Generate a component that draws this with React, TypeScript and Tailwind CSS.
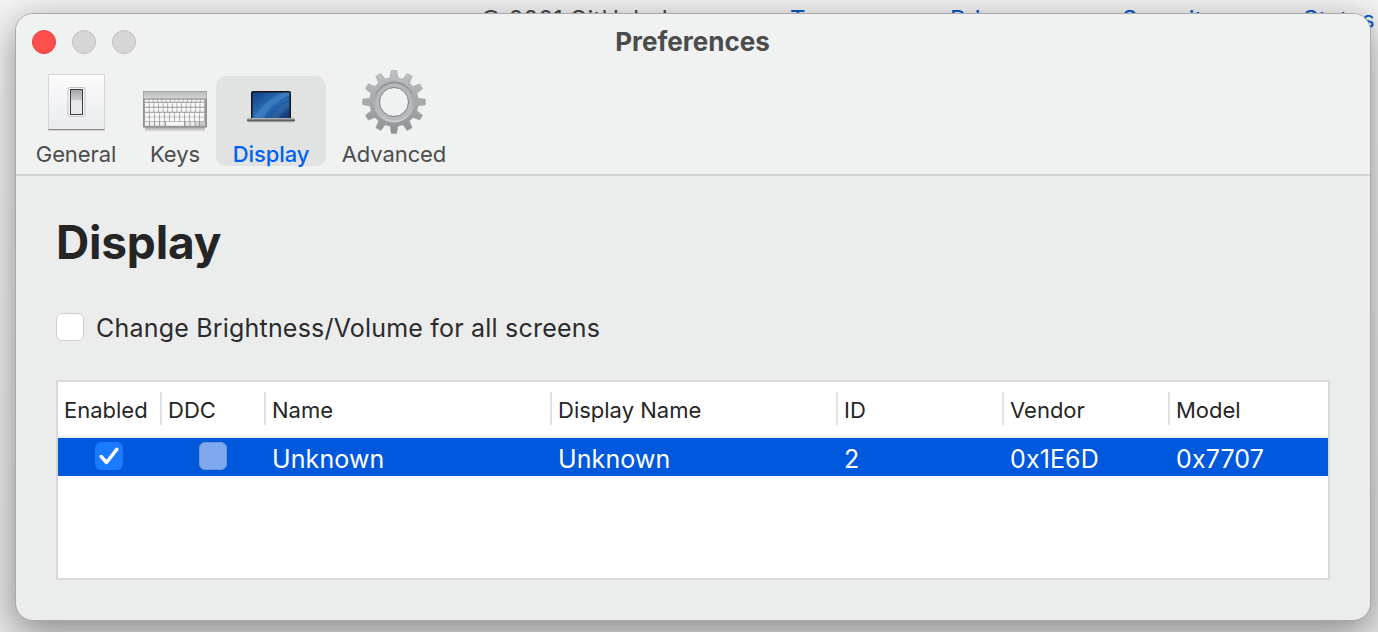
import React from "react";

function gearPath(cx: number, cy: number, rOut: number, rIn: number, teeth: number) {
  const pts: string[] = [];
  const step = (Math.PI * 2) / teeth;
  for (let i = 0; i < teeth; i++) {
    const a = i * step - Math.PI / 2;
    const add = (r: number, t: number) =>
      pts.push(`${(cx + r * Math.cos(a + t * step)).toFixed(2)} ${(cy + r * Math.sin(a + t * step)).toFixed(2)}`);
    add(rIn, -0.3);
    add(rOut, -0.17);
    add(rOut, 0.17);
    add(rIn, 0.3);
  }
  return "M" + pts.join("L") + "Z";
}

function SwitchIcon() {
  return (
    <svg width="58" height="58" viewBox="0 0 58 58">
      <defs>
        <linearGradient id="sw" x1="0" y1="0" x2="0" y2="1">
          <stop offset="0" stopColor="#fbfbfc" />
          <stop offset="1" stopColor="#e9ebee" />
        </linearGradient>
        <linearGradient id="sw2" x1="0" y1="0" x2="0" y2="1">
          <stop offset="0" stopColor="#a3a5a6" />
          <stop offset="0.4" stopColor="#c9cbcd" />
          <stop offset="0.42" stopColor="#e4e6e9" />
          <stop offset="1" stopColor="#e8eaed" />
        </linearGradient>
      </defs>
      <rect x="0.5" y="0.5" width="56" height="55.5" fill="url(#sw)" stroke="#d5d6d8" />
      <rect x="0.5" y="55" width="56" height="1.2" fill="#8b8c8e" />
      <rect x="20" y="13.5" width="17" height="29" rx="1.5" fill="#f5f6f7" stroke="#c4c5c7" />
      <rect x="22.5" y="15.5" width="12" height="25" fill="url(#sw2)" stroke="#3a3b3d" strokeWidth="1" />
    </svg>
  );
}

function KeyboardIcon() {
  const rows = [
    { y: 8.8, h: 2, n: 14 },
    { y: 11.8, h: 4, n: 13 },
    { y: 16.8, h: 4, n: 13 },
    { y: 21.8, h: 4, n: 12 },
    { y: 26.3, h: 4, n: 12 },
  ];
  return (
    <svg width="64" height="41" viewBox="0 0 64 41">
      <defs>
        <linearGradient id="kbs" x1="0" y1="0" x2="0" y2="1">
          <stop offset="0" stopColor="#b9baba" />
          <stop offset="1" stopColor="#d2d3d3" />
        </linearGradient>
        <linearGradient id="kbsh" x1="0" y1="0" x2="0" y2="1">
          <stop offset="0" stopColor="#a0a0a0" />
          <stop offset="1" stopColor="#f0f1f1" />
        </linearGradient>
      </defs>
      <rect x="2" y="36" width="60" height="5" fill="url(#kbsh)" />
      <rect x="0" y="0" width="64" height="36.5" fill="#8f9090" />
      <rect x="0.5" y="0.5" width="63" height="7" fill="url(#kbs)" />
      <rect x="1" y="8" width="62" height="27.5" fill="#9a9b9b" />
      {rows.map((r) =>
        Array.from({ length: r.n }).map((_, i) => {
          const w = 60 / r.n;
          return <rect key={r.y + "-" + i} x={2 + i * w} y={r.y} width={w - 0.8} height={r.h} rx="0.4" fill="#f7f7f7" />;
        })
      )}
      <rect x="2" y="30.8" width="4" height="4" fill="#eeeeee" />
      <rect x="7" y="30.8" width="4" height="4" fill="#eeeeee" />
      <rect x="12" y="30.8" width="4" height="4" fill="#eeeeee" />
      <rect x="17" y="30.8" width="4.5" height="4" fill="#eeeeee" />
      <rect x="23" y="30.8" width="18" height="4" fill="#f6f6f6" />
      <rect x="42.5" y="30.8" width="4" height="4" fill="#eeeeee" />
      <rect x="47.5" y="30.8" width="4" height="4" fill="#eeeeee" />
      <rect x="52.5" y="30.8" width="3.5" height="4" fill="#d8d8d8" />
      <rect x="57" y="30.8" width="5" height="4" fill="#c8c8c8" />
    </svg>
  );
}

function LaptopIcon() {
  return (
    <svg width="50" height="34" viewBox="0 0 50 34">
      <defs>
        <linearGradient id="scr" x1="0" y1="0" x2="1" y2="1">
          <stop offset="0" stopColor="#123f85" />
          <stop offset="0.5" stopColor="#2a6fb8" />
          <stop offset="1" stopColor="#0e336e" />
        </linearGradient>
        <linearGradient id="base" x1="0" y1="0" x2="0" y2="1">
          <stop offset="0" stopColor="#c4c5c7" />
          <stop offset="0.5" stopColor="#77797b" />
          <stop offset="1" stopColor="#303133" />
        </linearGradient>
      </defs>
      <path d="M5 3a2 2 0 0 1 2-2h36a2 2 0 0 1 2 2v25.5H5z" fill="#141517" />
      <rect x="6.5" y="2.5" width="37" height="26" fill="url(#scr)" />
      <path d="M9 26C15 16 24 8 38 2.5h5.5v3C30 10 23 17 18 28.5H9z" fill="#7db0e0" opacity="0.22" />
      <path d="M25 28.5C29 21 34 15 43.5 12v6c-5 2-8 5-11 10.5z" fill="#5d97d2" opacity="0.2" />
      <rect x="1" y="28" width="48" height="3.6" rx="1.4" fill="url(#base)" />
      <rect x="2" y="31.8" width="46" height="1.4" fill="#d4d5d5" />
    </svg>
  );
}

function GearIcon() {
  return (
    <svg width="64" height="64" viewBox="0 0 64 64">
      <defs>
        <linearGradient id="g1" x1="0" y1="0" x2="0" y2="1">
          <stop offset="0" stopColor="#bdc1c4" />
          <stop offset="1" stopColor="#8d9194" />
        </linearGradient>
        <linearGradient id="g2" x1="0" y1="0" x2="0" y2="1">
          <stop offset="0" stopColor="#8d9194" />
          <stop offset="1" stopColor="#c9ccce" />
        </linearGradient>
      </defs>
      <path d={gearPath(32, 32, 31.5, 24.5, 12)} fill="url(#g1)" stroke="#a0a3a6" strokeWidth="0.6" strokeLinejoin="round" />
      <circle cx="32" cy="32" r="20.5" fill="url(#g2)" />
      <circle cx="32" cy="32" r="18.5" fill="#b5b9bc" />
      <circle cx="32" cy="32" r="14.5" fill="#f0f1f1" stroke="#7c8083" strokeWidth="1" />
    </svg>
  );
}

function Tab({
  label,
  width,
  active,
  className,
  iconClass,
  children,
}: {
  label: string;
  width: string;
  active?: boolean;
  className?: string;
  iconClass: string;
  children: React.ReactNode;
}) {
  return (
    <div className={`flex h-[90px] flex-col items-center rounded-[10px] ${width} ${active ? "bg-[#e1e3e3]" : ""} ${className ?? ""}`}>
      <div className="flex h-[67px] items-start justify-center">
        <div className={iconClass}>{children}</div>
      </div>
      <span className={`text-[22px] leading-[23px] tracking-[-0.1px] ${active ? "font-medium text-[#0062f0]" : "text-[#4d4d4d]"}`}>
        {label}
      </span>
    </div>
  );
}

const columns = ["Enabled", "DDC", "Name", "Display Name", "ID", "Vendor", "Model"];
const gridCols = "grid grid-cols-[104px_104px_286px_286px_166px_166px_1fr]";

export default function App() {
  return (
    <div className="relative h-[632px] w-[1378px] overflow-hidden bg-gradient-to-b from-[#f3f3f3] to-[#e6e6e6] font-['Inter',sans-serif] [-webkit-font-smoothing:antialiased]">
      <div className="absolute left-0 top-[11px] h-[18px] w-full whitespace-nowrap text-[24px] leading-[18px]">
        <span className="absolute left-[480px] text-[#444]">© 2021 GitHub, Inc.</span>
        <span className="absolute left-[790px] text-[#0b57c4]">Terms</span>
        <span className="absolute left-[950px] text-[#0b57c4]">Privacy</span>
        <span className="absolute left-[1122px] text-[#0b57c4]">Security</span>
        <span className="absolute left-[1303px] text-[#0b57c4]">Status</span>
      </div>

      <div className="relative ml-[15px] mt-[13px] flex h-[608px] w-[1356px] flex-col overflow-hidden rounded-[18px] border border-[#a9a9a9] bg-[#ebeded] shadow-[0_10px_36px_rgba(0,0,0,0.42)]">
        <div className="h-[162px] shrink-0 border-b-2 border-[#d3d5d5] bg-[#f0f1f1]">
          <div className="flex h-[47px] items-center pl-[16px] pt-[8px]">
            <div className="flex gap-4">
              <span className="size-[24px] rounded-full border border-[#e2403e] bg-[#ff4f4c]" />
              <span className="size-[24px] rounded-full border border-[#bdbebd] bg-[#d5d6d5]" />
              <span className="size-[24px] rounded-full border border-[#bdbebd] bg-[#d5d6d5]" />
            </div>
            <span className="ml-[479px] w-[155px] whitespace-nowrap text-center text-[26px] font-bold leading-[24px] text-[#4c4c4c]">
              Preferences
            </span>
          </div>
          <div className="flex pl-[10px] pt-[15px]">
            <Tab label="General" width="w-[100px]" iconClass="-mt-[2px] ml-[1px]">
              <SwitchIcon />
            </Tab>
            <Tab label="Keys" width="w-[82px]" className="ml-[8px]" iconClass="mt-[15px]">
              <KeyboardIcon />
            </Tab>
            <Tab label="Display" width="w-[110px]" active iconClass="mt-[14px]">
              <LaptopIcon />
            </Tab>
            <Tab label="Advanced" width="w-[124px]" className="ml-[6px]" iconClass="-mt-[6px]">
              <GearIcon />
            </Tab>
          </div>
        </div>

        <div className="flex flex-1 flex-col pl-[40px] pr-[40px]">
          <h1 className="mt-[38px] text-[46px] font-bold leading-[56px] tracking-[-0.2px] text-[#252525]">Display</h1>
          <label className="mt-[41px] flex items-center gap-[12px]">
            <span className="size-[28px] rounded-[6px] border border-[#cfcfcf] bg-white" />
            <span className="pt-[2px] text-[25px] leading-[30px] tracking-[0.2px] text-[#2b2b2b]">Change Brightness/Volume for all screens</span>
          </label>

          <div className="mt-[37px] h-[200px] border-2 border-[#d8dada] bg-white">
            <div className={`${gridCols} h-[56px] items-center border-b-2 border-[#eceeee]`}>
              {columns.map((c, i) => (
                <div key={c} className="relative pl-[6px] pt-[1px] text-[22px] leading-[28px] text-[#262626]">
                  {c}
                  {i < columns.length - 1 && (
                    <span className="absolute right-0 top-[-3px] h-[33px] w-[2px] bg-[#e0e0e0]" />
                  )}
                </div>
              ))}
            </div>
            <div className={`${gridCols} h-[38px] items-center bg-[#0058dc] text-[25px] leading-[30px] tracking-[0.12px] text-white`}>
              <div className="flex justify-center pb-[2px] pr-[2px]">
                <span className="flex size-[28px] items-center justify-center rounded-[6px] bg-[#1a7bff]">
                  <svg width="20" height="18" viewBox="0 0 20 18" fill="none">
                    <path d="M2.2 9.5l5.3 6L17.8 2.4" stroke="#fff" strokeWidth="3.4" strokeLinecap="round" strokeLinejoin="round" />
                  </svg>
                </span>
              </div>
              <div className="flex justify-center pb-[2px] pr-[2px]">
                <span className="size-[28px] rounded-[6px] border border-[#6d97da] bg-[#7fa9ec]" />
              </div>
              <div className="pl-[6px] pt-[3px]">Unknown</div>
              <div className="pl-[6px] pt-[3px]">Unknown</div>
              <div className="pl-[6px] pt-[3px]">2</div>
              <div className="pl-[6px] pt-[3px]">0x1E6D</div>
              <div className="pl-[6px] pt-[3px]">0x7707</div>
            </div>
          </div>
        </div>
      </div>
    </div>
  );
}
